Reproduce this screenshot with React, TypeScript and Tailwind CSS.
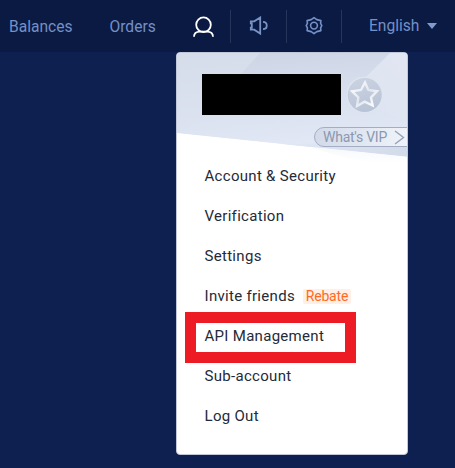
import React from "react";

const items = ["Account & Security", "Verification", "Settings", "Invite friends", "API Management", "Sub-account", "Log Out"];

function HeaderArt() {
  return (
    <svg className="absolute left-0 top-0" width="232" height="112" viewBox="0 0 232 112">
      <defs>
        <linearGradient id="base" x1="0" y1="0" x2="0.3" y2="1">
          <stop offset="0" stopColor="#d5dcea" />
          <stop offset="1" stopColor="#e0e6f3" />
        </linearGradient>
        <linearGradient id="band" x1="0.2" y1="0" x2="0.4" y2="1">
          <stop offset="0" stopColor="#cdd5e5" />
          <stop offset="0.6" stopColor="#dbe2f0" />
          <stop offset="1" stopColor="#e4eaf7" />
        </linearGradient>
        <linearGradient id="corner" x1="1" y1="0" x2="0" y2="1">
          <stop offset="0" stopColor="#e1e6f1" />
          <stop offset="1" stopColor="#dde4f1" />
        </linearGradient>
        <linearGradient id="sweep" x1="0" y1="0" x2="1" y2="0">
          <stop offset="0" stopColor="#e2e8f5" />
          <stop offset="1" stopColor="#d2dbea" />
        </linearGradient>
        <linearGradient id="fade" x1="0" y1="0" x2="0" y2="1">
          <stop offset="0" stopColor="#f7f8fa" />
          <stop offset="1" stopColor="#ffffff" />
        </linearGradient>
        <linearGradient id="coin" x1="0" y1="0" x2="0.3" y2="1">
          <stop offset="0" stopColor="#ccd4e2" />
          <stop offset="1" stopColor="#b9c4d7" />
        </linearGradient>
        <linearGradient id="star" x1="0" y1="0" x2="1" y2="1">
          <stop offset="0" stopColor="#ffffff" />
          <stop offset="0.5" stopColor="#e2e7ef" />
          <stop offset="1" stopColor="#ffffff" />
        </linearGradient>
      </defs>
      <path d="M0 0H232V104L0 80Z" fill="url(#base)" />
      <path d="M83 0H232V104L4 80Q42 46 83 0Z" fill="url(#band)" />
      <path d="M232 0H213L170 43L232 70Z" fill="url(#corner)" />
      <path d="M232 78Q180 91 105 91L232 104Z" fill="url(#sweep)" />
      <path d="M135 94L232 104V110Q180 112 135 94Z" fill="url(#fade)" />
      <circle cx="187.7" cy="42" r="18.3" fill="#dfe5ef" />
      <circle cx="187.7" cy="42" r="17" fill="url(#coin)" />
      <path d="M188 29.5L191.4 37L200 38.2L194 44.4L195.6 52.5L187.6 48.7L180 53L181.3 44.4L175.2 38.3L184 37Z" fill="none" stroke="url(#star)" strokeWidth="2.4" />
    </svg>
  );
}

export default function App() {
  return (
    <div className="h-[468px] w-[455px] overflow-hidden bg-[#0e204f] font-[Roboto,sans-serif]">
      <nav className="flex h-[52px] items-center bg-[#0b1a42] text-[15.6px] leading-5 text-[#7390c7]">
        <span className="ml-[9px] mt-[2px] w-[100.5px] shrink-0">Balances</span>
        <span className="mt-[2px] w-[83.5px] shrink-0">Orders</span>
        <svg className="mt-[2px] shrink-0" width="22" height="22" viewBox="0 0 22 22" fill="none" stroke="#ffffff" strokeWidth="1.8">
          <circle cx="10.5" cy="8.7" r="7.3" />
          <path d="M1 20.8C1 17 3.5 15.6 7 15.6H14C17.5 15.6 20 17 20 20.8" />
        </svg>
        <div className="ml-[15px] h-[33px] w-px bg-[#26355a]" />
        <svg className="ml-[18px] shrink-0" width="20" height="20" viewBox="0 0 20 20" fill="none" stroke="#7893c4" strokeWidth="1.8">
          <path d="M1.8 5.3H5.2L11.2 1.5V17.5L5.2 13.7H1.8V11.6H2.8V7.4H1.8Z" />
          <path d="M14 5.8C19 5.8 19 13.2 14 13.2" />
        </svg>
        <div className="ml-[17px] h-[33px] w-px bg-[#26355a]" />
        <svg className="ml-[17px] shrink-0" width="20" height="20" viewBox="0 0 20 20" fill="none" stroke="#7390c7" strokeWidth="1.6" strokeLinejoin="round">
          <path d="M10 1.6L12.8 3.6L16.9 4.6L16.6 7.4L17.8 9.6L16.6 11.8L16.9 14.6L12.8 15.6L10 17.6L7.2 15.6L3.1 14.6L3.4 11.8L2.2 9.6L3.4 7.4L3.1 4.6L7.2 3.6Z" />
          <circle cx="10" cy="9.6" r="3.4" />
        </svg>
        <div className="ml-[17px] h-[33px] w-px bg-[#26355a]" />
        <span className="ml-[27px] w-[51px]">English</span>
        <div className="ml-[7px] h-0 w-0 border-x-[5.5px] border-t-[6px] border-x-transparent border-t-[#7f9bce]" />
      </nav>
      <section className="relative ml-[176px] h-[403px] w-[232px] overflow-hidden rounded-[4px] border border-[#bfc7d8] bg-white">
        <HeaderArt />
        <div className="relative flex h-[102px] flex-col">
          <div className="ml-[25px] mt-[21px] h-[41px] w-[139px] bg-black" />
          <div className="ml-[137px] mt-[12px] flex h-[20px] w-[98px] items-center rounded-l-full border border-[#a3aec4] bg-gradient-to-r from-[#d2daea] to-[#f1f4f9] pl-[8px] text-[14px] tracking-[-0.25px] text-[#8b98b0]">
            <span className="mt-px w-[71px] whitespace-nowrap">What's VIP</span>
            <svg width="11" height="15" viewBox="0 0 11 15" fill="none" stroke="#97a2b8" strokeWidth="1.4">
              <path d="M1 1L9.5 7.5L1 14" />
            </svg>
          </div>
        </div>
        <ul className="relative text-[15px] tracking-[0.3px] text-[#252a38]">
          {items.map((item) => (
            <li key={item} className="flex h-10 items-center whitespace-nowrap pl-[27.5px] pt-[2px]">
              {item}
              {item === "Invite friends" && (
                <span className="ml-[8px] flex h-[15px] w-[48px] items-center justify-center rounded-[2px] bg-[#ffefe6] text-[14px] tracking-[-0.2px] text-[#ff6a1f]">Rebate</span>
              )}
            </li>
          ))}
        </ul>
        <div className="absolute left-[8px] top-[259px] h-[51px] w-[171px] border-[11px] border-[#ed1c24]" />
      </section>
    </div>
  );
}
